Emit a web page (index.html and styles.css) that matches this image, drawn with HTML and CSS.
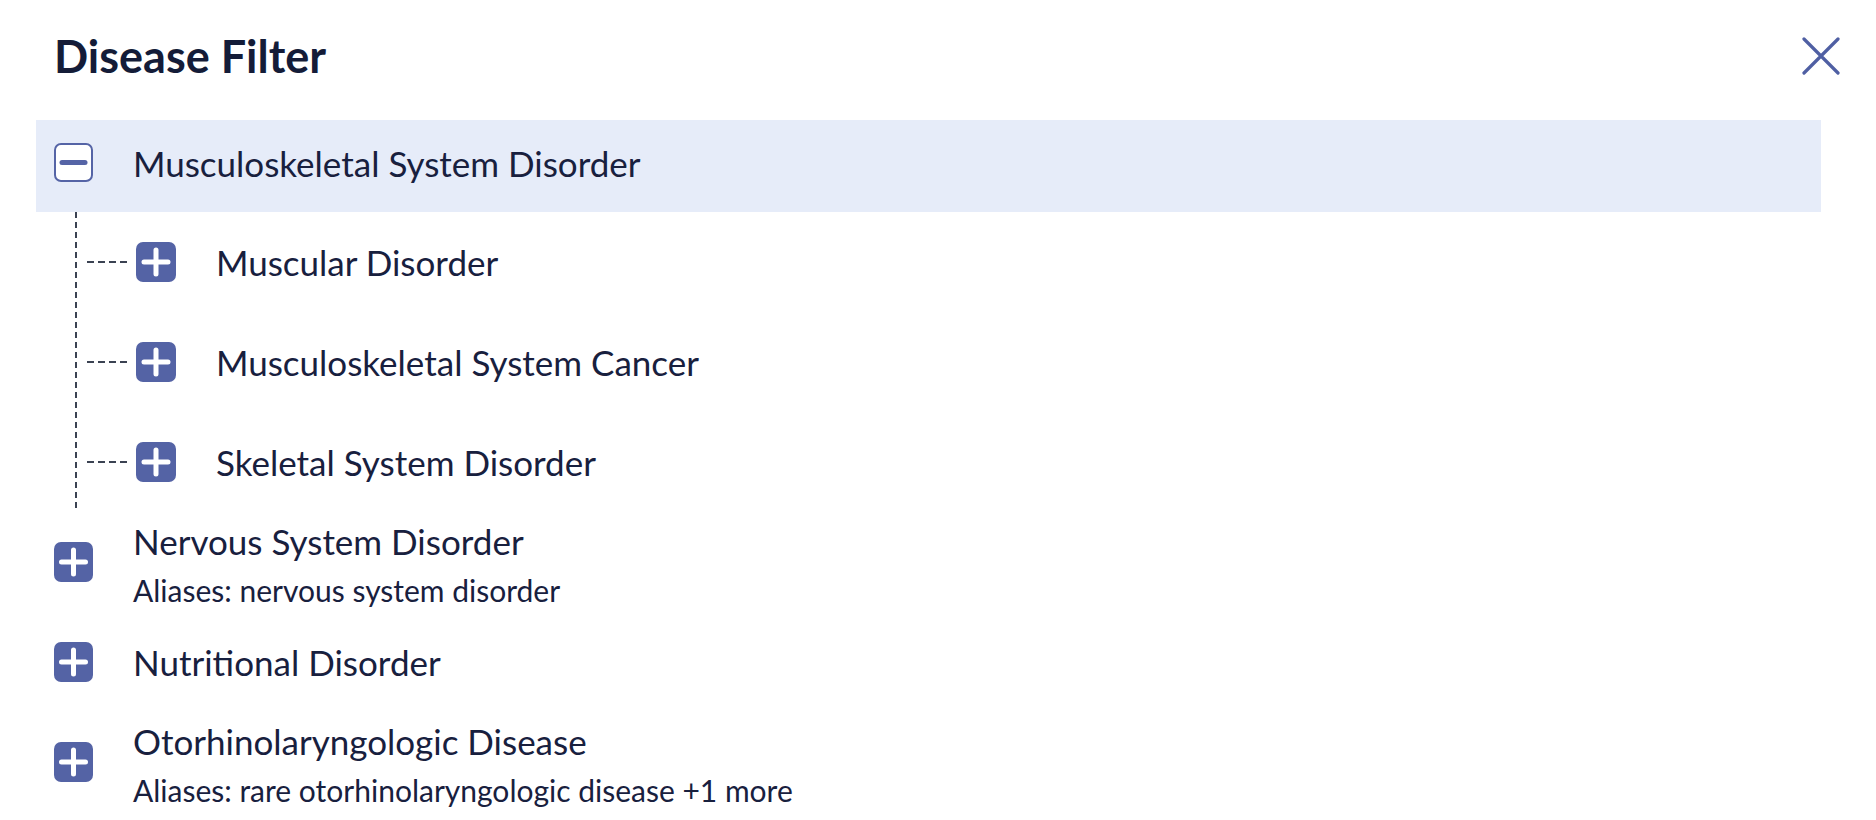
FILE: index.html
```html
<!DOCTYPE html>
<html lang="en">
<head>
<meta charset="utf-8">
<title>Disease Filter</title>
<link rel="stylesheet" href="styles.css">
</head>
<body>
<div class="panel">
  <header class="head">
    <h1 class="title">Disease Filter</h1>
    <button class="close" aria-label="Close">
      <svg width="38" height="38" viewBox="0 0 38 38"><path d="M2 2 L36 36 M36 2 L2 36" stroke="#4f5fa3" stroke-width="3.2" stroke-linecap="round" fill="none"/></svg>
    </button>
  </header>
  <ul class="tree">
    <li class="node">
      <div class="row active">
        <span class="tog minus"><svg width="39" height="39" viewBox="0 0 39 39"><rect x="1" y="1" width="37" height="37" rx="6" fill="#fff" stroke="#5564a6" stroke-width="2"/><path d="M8 19.5 H31" stroke="#5564a6" stroke-width="5" stroke-linecap="round"/></svg></span>
        <span class="label">Musculoskeletal System Disorder</span>
      </div>
      <ul class="children">
        <li class="child"><span class="dash"></span><span class="tog"><svg width="40" height="40" viewBox="0 0 40 40"><rect width="40" height="40" rx="7" fill="#5463a5"/><path d="M20 8 V32 M8 20 H32" stroke="#fff" stroke-width="5" stroke-linecap="round"/></svg></span><span class="label">Muscular Disorder</span></li>
        <li class="child"><span class="dash"></span><span class="tog"><svg width="40" height="40" viewBox="0 0 40 40"><rect width="40" height="40" rx="7" fill="#5463a5"/><path d="M20 8 V32 M8 20 H32" stroke="#fff" stroke-width="5" stroke-linecap="round"/></svg></span><span class="label">Musculoskeletal System Cancer</span></li>
        <li class="child"><span class="dash"></span><span class="tog"><svg width="40" height="40" viewBox="0 0 40 40"><rect width="40" height="40" rx="7" fill="#5463a5"/><path d="M20 8 V32 M8 20 H32" stroke="#fff" stroke-width="5" stroke-linecap="round"/></svg></span><span class="label">Skeletal System Disorder</span></li>
      </ul>
    </li>
    <li class="node">
      <div class="row">
        <span class="tog"><svg width="39" height="40" viewBox="0 0 39 40"><rect width="39" height="40" rx="7" fill="#5463a5"/><path d="M19.5 8 V32 M7.5 20 H31.5" stroke="#fff" stroke-width="5" stroke-linecap="round"/></svg></span>
        <div class="text"><span class="label">Nervous System Disorder</span><span class="alias">Aliases: nervous system disorder</span></div>
      </div>
    </li>
    <li class="node">
      <div class="row">
        <span class="tog"><svg width="39" height="40" viewBox="0 0 39 40"><rect width="39" height="40" rx="7" fill="#5463a5"/><path d="M19.5 8 V32 M7.5 20 H31.5" stroke="#fff" stroke-width="5" stroke-linecap="round"/></svg></span>
        <span class="label">Nutritional Disorder</span>
      </div>
    </li>
    <li class="node">
      <div class="row">
        <span class="tog"><svg width="39" height="40" viewBox="0 0 39 40"><rect width="39" height="40" rx="7" fill="#5463a5"/><path d="M19.5 8 V32 M7.5 20 H31.5" stroke="#fff" stroke-width="5" stroke-linecap="round"/></svg></span>
        <div class="text"><span class="label">Otorhinolaryngologic Disease</span><span class="alias">Aliases: rare otorhinolaryngologic disease +1 more</span></div>
      </div>
    </li>
  </ul>
</div>
</body>
</html>
```

FILE: styles.css
```css
* { box-sizing: border-box; }
html, body { margin: 0; padding: 0; background: #fff; }
body {
  font-family: Lato, "Open Sans", sans-serif;
  color: #18203e;
  overflow: hidden;
}
.panel { width: 1876px; height: 820px; }
.head {
  height: 112px;
  display: flex;
  align-items: center;
  justify-content: space-between;
  padding: 0 36px 0 54px;
}
.title {
  margin: 0;
  font-size: 45px;
  font-weight: 700;
  color: #141c38;
}
.close {
  border: 0;
  background: none;
  padding: 0;
  width: 38px;
  height: 38px;
  display: block;
  cursor: pointer;
}
.close svg { display: block; }
.tree {
  list-style: none;
  margin: 8px 55px 0 36px;
  padding: 0;
}
.node { margin: 0; padding: 0; }
.row {
  height: 100px;
  display: flex;
  align-items: center;
  padding-left: 18px;
}
.row.active {
  height: 92px;
  padding-bottom: 7px;
  background: #e6ecf9;
}
.tog { display: block; flex: none; }
.tog svg { display: block; }
.label {
  font-size: 35px;
  line-height: 56px;
  white-space: nowrap;
}
.row > .tog + .label,
.row > .tog + .text { margin-left: 40px; }
.text { display: flex; flex-direction: column; }
.alias {
  font-size: 30px;
  line-height: 42px;
  white-space: nowrap;
}
.children {
  list-style: none;
  margin: 0 0 0 39px;
  padding: 0;
  background: repeating-linear-gradient(to bottom, #3b4252 0 6px, transparent 6px 10px) left top / 2px 100% no-repeat;
}
.child {
  height: 100px;
  display: flex;
  align-items: center;
  padding-left: 12px;
}
.dash {
  width: 40px;
  height: 2px;
  background: repeating-linear-gradient(to right, #3b4252 0 7px, transparent 7px 11px);
  margin-right: 9px;
}
.child .label { margin-left: 40px; }
```
